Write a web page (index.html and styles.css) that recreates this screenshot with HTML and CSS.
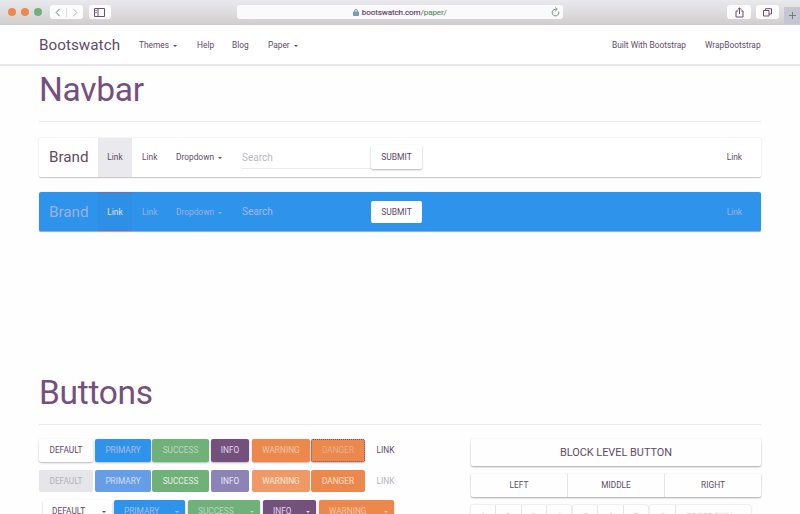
FILE: index.html
```html
<!DOCTYPE html>
<html lang="en">
<head>
<meta charset="utf-8">
<title>Bootswatch: Paper</title>
<link rel="stylesheet" href="styles.css">
</head>
<body>
<header class="chrome">
  <i class="dot"></i><i class="dot"></i><i class="dot green"></i>
  <div class="tool history">
    <span><svg width="6" height="9" viewBox="0 0 6 9"><path d="M4.7.8 1.2 4.5l3.5 3.7"/></svg></span>
    <span class="dim"><svg width="6" height="9" viewBox="0 0 6 9"><path d="M1.3.8l3.5 3.7-3.5 3.7"/></svg></span>
  </div>
  <div class="tool sidebar"><svg width="11" height="9" viewBox="0 0 11 9"><path d="M.5.5h10v8H.5zM4 .5v8M1.5 2.5h1.2M1.5 4.5h1.2"/></svg></div>
  <div class="address">
    <svg class="lock" width="6" height="7" viewBox="0 0 6 7"><path d="M1.5 3V2a1.5 1.5 0 0 1 3 0v1"/><path class="solid" d="M.5 3h5v3.5h-5z"/></svg>
    <span>bootswatch.com<em>/paper/</em></span>
    <svg class="reload" width="9" height="10" viewBox="0 0 9 10"><path d="M7.6 4.6A3.3 3.3 0 1 1 4.3 2.3h1.5M4.3.6l1.9 1.7L4.3 4"/></svg>
  </div>
  <div class="tool share"><svg width="9" height="11" viewBox="0 0 9 11"><path d="M3 4H1v6h7V4H6M4.5 7V1M2.7 2.6 4.5.8l1.8 1.8"/></svg></div>
  <div class="tool tabs"><svg width="9" height="9" viewBox="0 0 9 9"><path d="M.5 2.5h5.5v5.5H.5zM2.5 2.5V.7h6V6H6"/></svg></div>
  <div class="newtab"><svg width="7" height="7" viewBox="0 0 7 7"><path d="M3.5 0v7M0 3.5h7"/></svg></div>
</header>

<nav class="site">
  <a class="logo">Bootswatch</a>
  <a class="s-themes">Themes <i class="caret"></i></a>
  <a class="s-help">Help</a>
  <a class="s-blog">Blog</a>
  <a class="s-paper">Paper <i class="caret"></i></a>
  <a class="s-built">Built With Bootstrap</a>
  <a class="s-wrap">WrapBootstrap</a>
</nav>

<main>
  <h1>Navbar</h1>
  <nav class="bar">
    <a class="brand">Brand</a><a class="active">Link</a><a class="plain">Link</a>
    <a class="drop">Dropdown <i class="caret"></i></a>
    <span class="search">Search</span><button class="submit">SUBMIT</button><a class="last">Link</a>
  </nav>
  <nav class="bar inverse">
    <a class="brand">Brand</a><a class="active">Link</a><a class="plain">Link</a>
    <a class="drop">Dropdown <i class="caret"></i></a>
    <span class="search">Search</span><button class="submit">SUBMIT</button><a class="last">Link</a>
  </nav>

  <h1 class="second">Buttons</h1>
  <section class="columns">
    <div class="left">
      <div class="row">
        <b class="btn w-def">DEFAULT</b><b class="btn w-pri blue">PRIMARY</b><b class="btn w-suc green">SUCCESS</b><b class="btn w-inf purple">INFO</b><b class="btn w-war orange">WARNING</b><b class="btn w-dan orange outlined">DANGER</b><b class="link">LINK</b>
      </div>
      <div class="row off">
        <b class="btn w-def grey">DEFAULT</b><b class="btn w-pri blue">PRIMARY</b><b class="btn w-suc green">SUCCESS</b><b class="btn w-inf purple">INFO</b><b class="btn w-war orange">WARNING</b><b class="btn w-dan orange">DANGER</b><b class="link">LINK</b>
      </div>
      <div class="row split">
        <b class="btn g-def"><span>DEFAULT</span><i class="caret"></i></b><b class="btn g-pri blue"><span>PRIMARY</span><i class="caret"></i></b><b class="btn g-suc green"><span>SUCCESS</span><i class="caret"></i></b><b class="btn g-inf purple"><span>INFO</span><i class="caret"></i></b><b class="btn g-war orange"><span>WARNING</span><i class="caret"></i></b>
      </div>
    </div>
    <div class="right">
      <div class="block">BLOCK LEVEL BUTTON</div>
      <div class="justified"><span>LEFT</span><span>MIDDLE</span><span>RIGHT</span></div>
      <div class="groups">
        <div class="g1"><span>1</span><span>2</span><span>3</span><span>4</span></div>
        <div class="g2"><span>5</span><span>6</span><span>7</span></div>
        <div class="g3"><span>8</span><span>DROPDOWN <i class="caret"></i></span></div>
      </div>
    </div>
  </section>
</main>
</body>
</html>
```
FILE: styles.css
```css
* { box-sizing: border-box; }
html, body { margin: 0; height: 514px; overflow: hidden; }
body { background: #fefefe; color: #5f4a68; font: 8.35px/12px Roboto, sans-serif; }
svg { display: block; fill: none; stroke: #694f72; stroke-width: 1; }
.caret { display: inline-block; border: 2.5px solid transparent; border-top-color: currentColor; border-bottom: 0; vertical-align: 1px; margin-left: 2px; }

.chrome { display: flex; height: 25px; padding: 0 0 0 8px; background: linear-gradient(#e9e9ee, #d2cfd0); border-bottom: 1px solid #d0cccd; }
.dot { width: 8px; height: 8px; margin: 8px 5px 0 0; border-radius: 50%; background: #ed884c; }
.dot.green { background: #70b079; }
.tool { display: flex; align-items: center; justify-content: center; height: 14px; margin-top: 5px; border-radius: 3px; background: #fcfcfd; }
.history { width: 33px; margin-left: 3px; }
.history span { display: flex; justify-content: center; flex: 1; }
.history svg { stroke: #66866d; }
.history .dim { border-left: 1px solid #dcdbe0; }
.history .dim svg { stroke: #bbb8c2; }
.sidebar { width: 22px; margin-left: 6px; }
.address { display: flex; align-items: center; width: 327px; height: 14px; margin: 5px 0 0 126px; padding-left: 116px; border-radius: 3px; background: #fafafc; color: #60416c; font-size: 8px; -webkit-text-stroke: .15px; }
.address span { letter-spacing: -.08px; padding-top: 1px; }
.address em { font-style: normal; color: #63936b; }
.lock { margin-right: 3px; stroke: #7799b4; }
.lock .solid { fill: #789fb3; }
.reload { margin: 0 3px 0 auto; stroke: #72957a; }
.share { width: 24px; margin-left: 164px; }
.tabs { width: 23px; margin-left: 5px; }
.newtab { display: flex; align-items: center; justify-content: center; width: 16px; height: 17px; margin: 7px 0 0 5px; background: #c6c6d3; }
.newtab svg { stroke: #66866d; }

.site { display: flex; align-items: center; height: 41px; padding: 0 0 0 39px; background: #fff; border-bottom: 2px solid #e8e7ec; }
.logo { width: 100px; font-size: 15.2px; line-height: 20px; letter-spacing: .05px; }
.s-themes { width: 58px; }
.s-help { width: 35px; }
.s-blog { width: 36px; }
.s-paper { width: 344px; }
.s-built { width: 93px; }
.site a { white-space: nowrap; }

main { width: 722px; margin-left: 39px; }
h1 { height: 56px; margin: 0; padding-top: 3px; border-bottom: 1px solid #ebeaef; color: #74517d; font-size: 33.5px; line-height: 41px; font-weight: 400; letter-spacing: -.3px; }
.bar { display: flex; align-items: center; height: 40px; margin-top: 16px; background: #fff; border-radius: 2px; border-bottom: 1px solid #cdc8cc; box-shadow: 0 0 2px #dedde4; }
.bar:not(.inverse) { padding-bottom: 1px; }
.brand { width: 59px; padding-left: 10px; font-size: 15.2px; line-height: 20px; }
.active { align-self: stretch; width: 34px; margin-bottom: -1px; background: #e9e9ee; line-height: 39px; text-align: center; }
.plain { width: 44px; padding-left: 10px; }
.drop { width: 66px; white-space: nowrap; }
.search { width: 129px; height: 23px; border-bottom: 1px solid #e9e8ed; color: #bab8bf; font-size: 10px; line-height: 24px; }
.submit { width: 51px; height: 24px; padding: 0; border: 0; border-radius: 2px; background: #fff; box-shadow: 0 1px 2px #b4b1ba; color: #5e4668; font: 8.5px/24px Roboto, sans-serif; }
.last { margin-left: auto; padding-right: 19px; }
.inverse { margin-top: 14px; background: #2d93eb; color: #9fb0e3; border-bottom-color: #9baade; }
.inverse .active { margin-bottom: 0; background: #2d8fe6; color: #e0e4f5; border-top: 1px solid #7771a5; border-bottom: 1px solid #7771a5; line-height: 39px; }
.inverse .search { color: #a9b8e8; border-color: transparent; }
.inverse .submit { box-shadow: none; height: 22px; line-height: 22px; }
.second { height: 57px; margin-top: 136px; padding-top: 4px; }

.columns { display: flex; justify-content: space-between; margin-top: 14px; }
.row { display: flex; height: 23px; margin-bottom: 8px; }
.btn, .link { font-weight: 400; font-size: 8.3px; line-height: 23px; text-align: center; }
.btn { border-radius: 2px; box-shadow: 0 1px 2px #b9b6bf; }
.link { width: 41px; }
.w-def { width: 54px; margin-right: 2px; }
.w-pri { width: 56px; margin-right: 1px; }
.w-suc { width: 57px; margin-right: 2px; }
.w-inf { width: 38px; margin-right: 3px; }
.w-war { width: 58px; margin-right: 1px; }
.w-dan { width: 54px; }
.blue { background: #2d93eb; color: #b1bbe9; }
.green { background: #70b079; color: #bdd6c1; }
.purple { background: #74517d; color: #e0d7eb; }
.orange { background: #ed884c; color: #f3c5ac; }
.outlined { border: 1px dotted #74517d; color: #e5af94; line-height: 21px; }
.off .btn { box-shadow: none; height: 22px; line-height: 22px; }
.off .grey { background: #e5e5ea; color: #b5b4bb; }
.off .blue { background: #659de6; color: #d9def6; }
.off .green { color: #e5eee8; }
.off .purple { background: #8c83b6; color: #eee9f4; }
.off .w-war { background: #ef9a66; color: #fbeadf; }
.off .w-dan { color: #fae3d6; }
.off .link { color: #b4b2ba; }
.split { margin: -1px 0 0 4px; }
.split .btn { display: flex; align-items: center; justify-content: space-between; padding: 0 6px 0 10px; }
.split .g-def { width: 69px; margin-right: 2px; padding-left: 9px; }
.g-pri { width: 71px; margin-right: 3px; }
.g-suc { width: 72px; margin-right: 3px; }
.g-inf { width: 53px; margin-right: 3px; }
.g-war { width: 75px; }

.right { width: 290px; }
.block { height: 27px; border-radius: 2px; box-shadow: 0 1px 2px #aaa6ad; font-size: 10.9px; line-height: 27px; text-align: center; }
.justified, .groups > div { display: flex; border-radius: 2px; box-shadow: 0 1px 2px #aaa6ad; text-align: center; }
.justified { height: 23px; margin-top: 8px; font-size: 8.3px; line-height: 23px; }
.justified span { flex: 1; }
.justified span + span, .groups span + span { border-left: 1px solid #e5e4e9; }
.groups { display: flex; gap: 2px; margin-top: 8px; color: #cfced5; font-size: 8.3px; line-height: 24px; }
.groups > div { height: 23px; box-shadow: 0 0 2px #c5c3cb; }
.groups span { flex: 1; }
.g1 { width: 100px; }
.g2 { width: 75px; }
.g3 { width: 101px; }
.groups .g3 span:first-child { flex: 0 0 25px; }
```
